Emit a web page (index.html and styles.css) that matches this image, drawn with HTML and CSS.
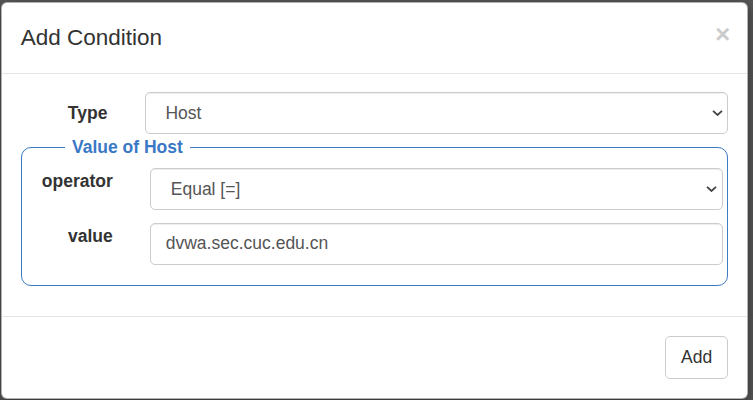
FILE: index.html
```html
<!DOCTYPE html>
<html>
<head>
<meta charset="utf-8">
<link rel="stylesheet" href="styles.css">
</head>
<body>
<div class="modal">
  <div class="modal-header">
    <button class="close" type="button">×</button>
    <h4 class="modal-title">Add Condition</h4>
  </div>
  <div class="modal-body">
    <div class="row type-row">
      <label class="control-label">Type</label>
      <div class="select-wrap">
        <select class="form-control"><option>Host</option></select>
        <svg class="chev" viewBox="0 0 11 6" width="11" height="6"><path d="M1 0.9 L5.5 5 L10 0.9" fill="none" stroke="#444" stroke-width="1.8"/></svg>
      </div>
    </div>
    <fieldset class="group">
      <legend>Value of Host</legend>
      <div class="rows">
        <label class="control-label inner">operator</label>
        <div class="select-wrap">
          <select class="form-control"><option>Equal [=]</option></select>
          <svg class="chev" viewBox="0 0 11 6" width="11" height="6"><path d="M1 0.9 L5.5 5 L10 0.9" fill="none" stroke="#444" stroke-width="1.8"/></svg>
        </div>
        <label class="control-label inner">value</label>
        <input class="form-control text" type="text" value="dvwa.sec.cuc.edu.cn">
      </div>
    </fieldset>
  </div>
  <div class="modal-footer">
    <button class="btn" type="button">Add</button>
  </div>
</div>
</body>
</html>
```
FILE: styles.css
```css
html, body {
  margin: 0;
  padding: 0;
}
body {
  background: #555555;
  font-family: "Liberation Sans", Arial, sans-serif;
  font-size: 17.5px;
  color: #333;
  height: 400px;
  overflow: hidden;
}
.modal {
  margin: 2px 0 0 1px;
  width: 747px;
  box-sizing: border-box;
  background: #fff;
  border: 1px solid rgba(0, 0, 0, 0.3);
  border-radius: 6px;
  box-shadow: 0 4px 12px rgba(0, 0, 0, 0.4);
}
.modal-header {
  padding: 18.75px;
  border-bottom: 1px solid #e5e5e5;
}
.modal-title {
  margin: 0;
  font-size: 22.5px;
  font-weight: normal;
  line-height: 32.14px;
  color: #333;
}
.close {
  float: right;
  margin-top: -1px;
  margin-right: -2px;
  padding: 0;
  border: 0;
  background: transparent;
  font-family: "Liberation Sans", Arial, sans-serif;
  font-size: 26.25px;
  font-weight: bold;
  line-height: 1;
  color: #000;
  opacity: 0.2;
  text-shadow: 0 1px 0 #fff;
}
.modal-body {
  padding: 18.75px;
}
.row {
  display: grid;
  grid-template-columns: 86.65px 1fr;
  column-gap: 37.5px;
}
.type-row {
  margin-bottom: 0.8px;
}
.control-label {
  font-weight: bold;
  text-align: right;
  padding-top: 8.75px;
  line-height: 25px;
}
.control-label.inner {
  padding-top: 0;
  line-height: 26.5px;
}
.select-wrap {
  position: relative;
}
.form-control {
  display: block;
  width: 100%;
  height: 42px;
  box-sizing: border-box;
  margin: 0;
  padding: 0 30px 0 19.5px;
  border: 1px solid #ccc;
  border-radius: 5px;
  background: #fff;
  font-family: "Liberation Sans", Arial, sans-serif;
  font-size: 17.5px;
  color: #555;
  box-shadow: inset 0 1px 1px rgba(0, 0, 0, 0.075);
  appearance: none;
  -webkit-appearance: none;
  outline: none;
}
.form-control.text {
  padding: 0 14.5px;
}
.chev {
  position: absolute;
  right: 5.5px;
  top: 18px;
  pointer-events: none;
}
.group {
  margin: 0 0 11.5px 0;
  padding: 7.6px 4.5px 20px 4.5px;
  border: 1px solid #3d7bc6;
  border-radius: 10px;
  min-width: 0;
}
.group legend {
  margin-left: 38.75px;
  padding: 0 7px;
  font-weight: bold;
  font-size: 17.5px;
  line-height: 25px;
  color: #3a78c6;
}
.rows {
  display: grid;
  grid-template-columns: 86.5px 1fr;
  column-gap: 37.5px;
  row-gap: 13px;
  align-items: start;
}
.modal-footer {
  border-top: 1px solid #e5e5e5;
  padding: 18.75px;
  display: flex;
  justify-content: flex-end;
}
.btn {
  padding: 7.5px 15px;
  border: 1px solid #ccc;
  border-radius: 5px;
  background: #fff;
  font-family: "Liberation Sans", Arial, sans-serif;
  font-size: 17.5px;
  line-height: 26px;
  color: #333;
}
```
